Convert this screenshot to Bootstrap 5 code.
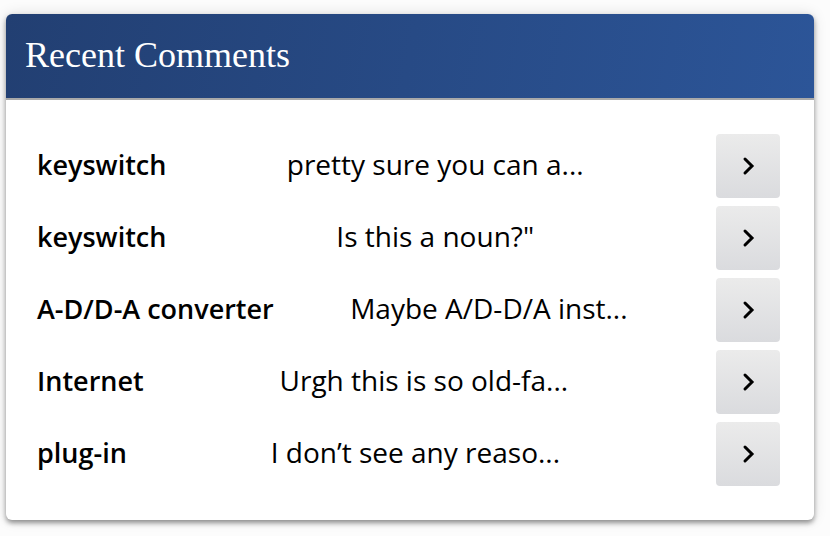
<!DOCTYPE html>
<html lang="en">
<head>
<meta charset="utf-8">
<meta name="viewport" content="width=device-width, initial-scale=1">
<title>Recent Comments</title>
<link href="https://cdn.jsdelivr.net/npm/bootstrap@5.3.0/dist/css/bootstrap.min.css" rel="stylesheet">
<style>
body { background: #fcfcfc; color: #000; font-family: "Open Sans", "Noto Sans", sans-serif; }
.comments-page { padding: 14px 16px 16px 6px; }
.comments-panel { border: 0; border-radius: 6px; box-shadow: 0 3px 5px rgba(0,0,0,.4), 0 0 14px rgba(0,0,0,.12); }
.comments-head { background: linear-gradient(100deg, #223f72, #2c5598); border-bottom: 2px solid #a9a9a9; border-radius: 6px 6px 0 0; padding: 17px 19px 19px; }
.comments-title { font-family: "Liberation Serif", serif; font-size: 36px; line-height: 48px; font-weight: 400; color: #fff; }
.comments-list { padding: 34px 34px 34px 31px; gap: 8px; }
.comment-row { font-size: 28px; line-height: 40px; }
.comment-term { font-size: 27px; font-weight: 600; padding-bottom: 2px; }
.comment-text { font-weight: 400; padding: 0 12px 4px 0; }
.comment-go { width: 64px; height: 64px; border: 0; border-radius: 4px; background: linear-gradient(#ebebeb, #dadbde); }
</style>
</head>
<body>
<main class="comments-page">
<section class="card comments-panel" aria-labelledby="comments-title">
<header class="comments-head"><h2 class="comments-title m-0" id="comments-title">Recent Comments</h2></header>
<ul class="comments-list list-unstyled d-flex flex-column m-0">
<li class="comment-row d-flex align-items-center justify-content-between"><span class="comment-term">keyswitch</span><span class="comment-text">pretty sure you can a...</span><button type="button" class="comment-go btn p-0 d-flex align-items-center justify-content-center" aria-label="Open comment on keyswitch"><svg width="18" height="20" viewBox="0 0 18 20" fill="none" stroke="#000" stroke-width="3" stroke-linecap="round" aria-hidden="true"><path d="M6 3 13 10 6 17"/></svg></button></li>
<li class="comment-row d-flex align-items-center justify-content-between"><span class="comment-term">keyswitch</span><span class="comment-text">Is this a noun?"</span><button type="button" class="comment-go btn p-0 d-flex align-items-center justify-content-center" aria-label="Open comment on keyswitch"><svg width="18" height="20" viewBox="0 0 18 20" fill="none" stroke="#000" stroke-width="3" stroke-linecap="round" aria-hidden="true"><path d="M6 3 13 10 6 17"/></svg></button></li>
<li class="comment-row d-flex align-items-center justify-content-between"><span class="comment-term">A-D/D-A converter</span><span class="comment-text">Maybe A/D-D/A inst...</span><button type="button" class="comment-go btn p-0 d-flex align-items-center justify-content-center" aria-label="Open comment on A-D/D-A converter"><svg width="18" height="20" viewBox="0 0 18 20" fill="none" stroke="#000" stroke-width="3" stroke-linecap="round" aria-hidden="true"><path d="M6 3 13 10 6 17"/></svg></button></li>
<li class="comment-row d-flex align-items-center justify-content-between"><span class="comment-term">Internet</span><span class="comment-text">Urgh this is so old-fa...</span><button type="button" class="comment-go btn p-0 d-flex align-items-center justify-content-center" aria-label="Open comment on Internet"><svg width="18" height="20" viewBox="0 0 18 20" fill="none" stroke="#000" stroke-width="3" stroke-linecap="round" aria-hidden="true"><path d="M6 3 13 10 6 17"/></svg></button></li>
<li class="comment-row d-flex align-items-center justify-content-between"><span class="comment-term">plug-in</span><span class="comment-text">I don’t see any reaso...</span><button type="button" class="comment-go btn p-0 d-flex align-items-center justify-content-center" aria-label="Open comment on plug-in"><svg width="18" height="20" viewBox="0 0 18 20" fill="none" stroke="#000" stroke-width="3" stroke-linecap="round" aria-hidden="true"><path d="M6 3 13 10 6 17"/></svg></button></li>
</ul>
</section>
</main>
<script src="https://cdn.jsdelivr.net/npm/bootstrap@5.3.0/dist/js/bootstrap.bundle.min.js"></script>
</body>
</html>
